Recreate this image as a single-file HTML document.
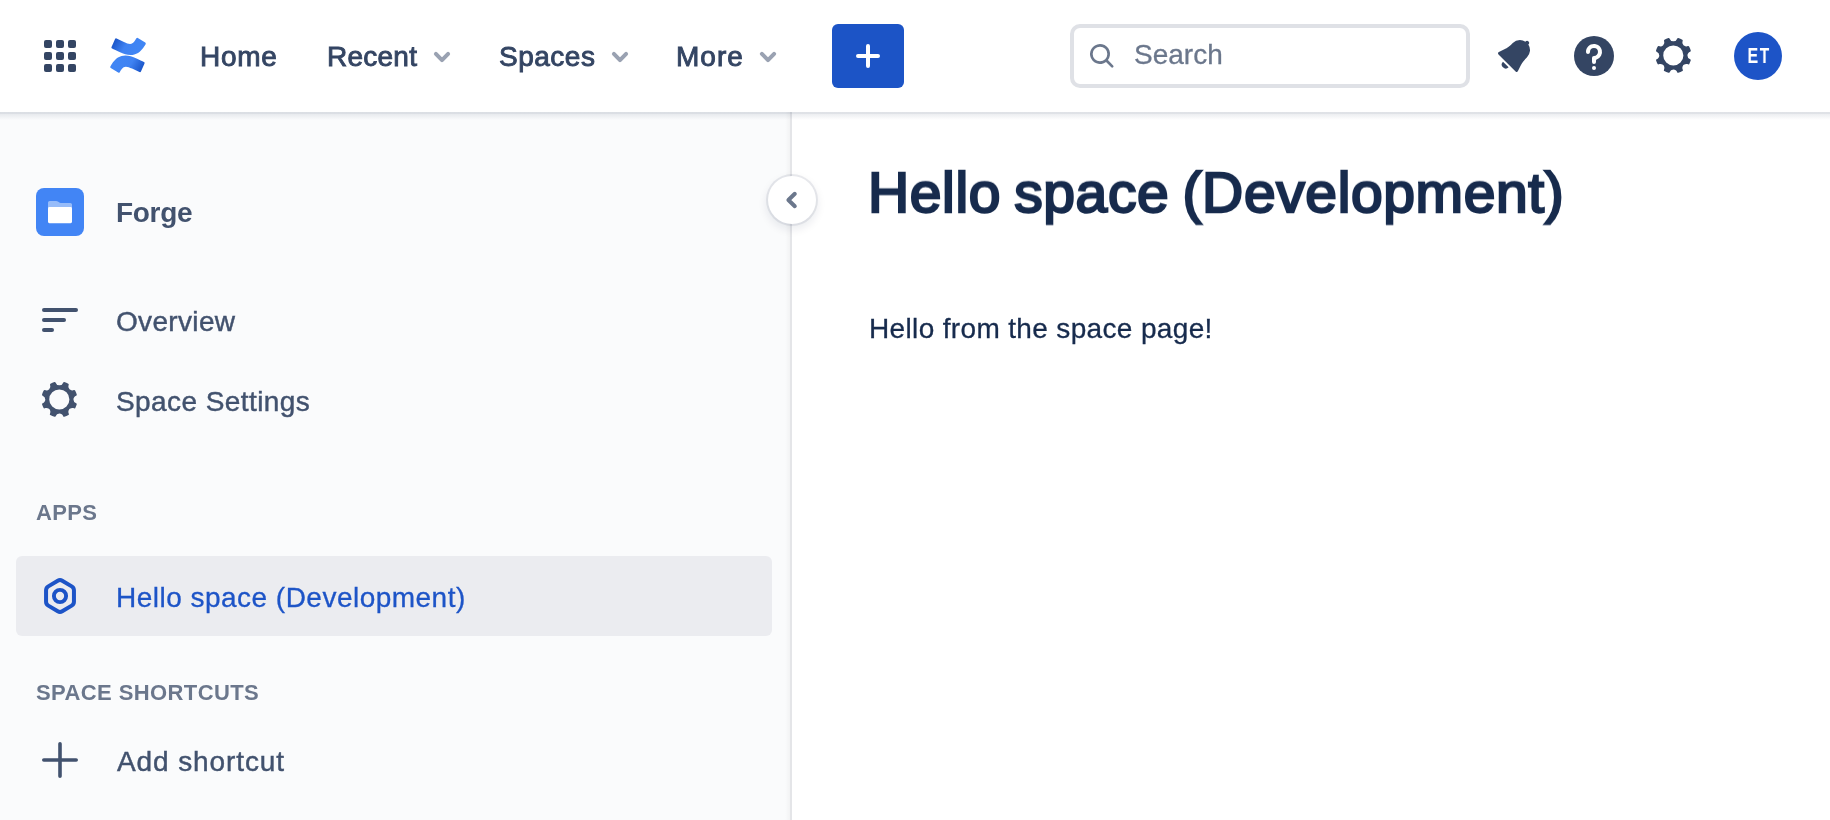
<!DOCTYPE html>
<html lang="en">
<head>
<meta charset="utf-8">
<title>Hello space (Development) - Forge - Confluence</title>
<style>
*{box-sizing:border-box;margin:0;padding:0}
html,body{width:1830px;height:820px;overflow:hidden;background:#fff}
body{position:relative;font-family:"Liberation Sans",sans-serif;color:#172B4D;-webkit-font-smoothing:antialiased}
.abs{position:absolute}
.t{position:absolute;white-space:nowrap;line-height:32px;font-size:28px;will-change:transform}
/* header */
#header{position:absolute;left:0;top:0;width:1830px;height:112px;background:#fff;z-index:5}
#hshadow{position:absolute;left:0;top:112px;width:1830px;height:8px;z-index:4;background:linear-gradient(to bottom,rgba(9,30,66,0.13) 0,rgba(9,30,66,0.13) 2px,rgba(9,30,66,0.08) 2px,rgba(9,30,66,0) 8px)}
.nav{color:#344563;-webkit-text-stroke:0.9px #344563}
.chev{position:absolute;width:48px;height:48px}
#create{position:absolute;left:832px;top:24px;width:72px;height:64px;border-radius:6px;background:#1C54C6}
#search{position:absolute;left:1070px;top:24px;width:400px;height:64px;border:4px solid #DFE1E6;border-radius:10px;background:#fff}
#avatar{position:absolute;left:1734px;top:32px;width:48px;height:48px;border-radius:50%;background:#1D54C7;color:#fff;text-align:center;font-weight:bold;font-size:22px;line-height:48px}
#avatar span{display:inline-block;transform:scaleX(0.72);letter-spacing:2.2px;will-change:transform;position:relative;left:0.8px;top:-0.2px}
/* sidebar */
#sidebar{position:absolute;left:0;top:112px;width:790px;height:708px;background:#FAFBFC}
#divider{position:absolute;left:790px;top:112px;width:2px;height:708px;background:#E4E5E8}
#dshadow{position:absolute;left:785px;top:112px;width:5px;height:708px;background:linear-gradient(to right,rgba(0,0,0,0),rgba(0,0,0,0.03))}
#sel{position:absolute;left:16px;top:556px;width:756px;height:80px;border-radius:6px;background:#EBECF0}
.side{color:#42526E;-webkit-text-stroke:0.45px #42526E}
.head{will-change:transform;position:absolute;white-space:nowrap;font-size:22px;line-height:32px;font-weight:bold;color:#6B778C;letter-spacing:0.6px}
#collapse{position:absolute;left:768px;top:176px;width:48px;height:48px;border-radius:50%;background:#fff;box-shadow:0 0 0 2px rgba(9,30,66,0.08),0 4px 8px 2px rgba(9,30,66,0.08);z-index:6}
svg{position:absolute;overflow:visible}
</style>
</head>
<body>

<div id="header">
  <!-- app switcher -->
  <svg style="left:36px;top:32px" width="48" height="48" viewBox="0 0 24 24" fill="#344563">
    <rect x="4" y="4" width="4" height="4" rx="1"/><rect x="10" y="4" width="4" height="4" rx="1"/><rect x="16" y="4" width="4" height="4" rx="1"/>
    <rect x="4" y="10" width="4" height="4" rx="1"/><rect x="10" y="10" width="4" height="4" rx="1"/><rect x="16" y="10" width="4" height="4" rx="1"/>
    <rect x="4" y="16" width="4" height="4" rx="1"/><rect x="10" y="16" width="4" height="4" rx="1"/><rect x="16" y="16" width="4" height="4" rx="1"/>
  </svg>
  <!-- confluence logo -->
  <svg id="logo" style="left:106.200px;top:33.400px" width="44" height="44" viewBox="0 0 32 32">
    <defs>
      <linearGradient id="lg1" x1="26.8" y1="28.5" x2="11" y2="19.4" gradientUnits="userSpaceOnUse"><stop offset="0" stop-color="#1650C4"/><stop offset="0.55" stop-color="#3F82F2"/><stop offset="1" stop-color="#4085F4"/></linearGradient>
      <linearGradient id="lg2" x1="5.2" y1="3.5" x2="21" y2="12.6" gradientUnits="userSpaceOnUse"><stop offset="0" stop-color="#1650C4"/><stop offset="0.55" stop-color="#3F82F2"/><stop offset="1" stop-color="#4085F4"/></linearGradient>
    </defs>
    <path transform="translate(-0.55 0)" fill="url(#lg1)" d="M4.56 22.94c-.27.44-.57.95-.83 1.36a.83.83 0 0 0 .28 1.13l5.39 3.32a.83.83 0 0 0 1.15-.28c.21-.36.49-.83.79-1.33 2.14-3.53 4.29-3.1 8.17-1.24l5.35 2.54a.83.83 0 0 0 1.12-.42l2.57-5.8a.83.83 0 0 0-.42-1.09c-1.13-.53-3.37-1.59-5.39-2.56-7.27-3.53-13.44-3.3-18.18 4.37z"/>
    <path transform="translate(0.55 0.4)" fill="url(#lg2)" d="M27.44 9.08c.27-.44.57-.95.83-1.36a.83.83 0 0 0-.28-1.13L22.6 3.27a.83.83 0 0 0-1.15.28c-.21.36-.49.83-.79 1.33-2.14 3.53-4.29 3.1-8.17 1.24L7.16 3.6a.83.83 0 0 0-1.12.42L3.47 9.82a.83.83 0 0 0 .42 1.09c1.13.53 3.37 1.59 5.39 2.56 7.27 3.52 13.44 3.29 18.16-4.39z"/>
  </svg>

  <div class="t nav" id="n1" style="left:200px;top:40.500px;letter-spacing:0.750px">Home</div>
  <div class="t nav" id="n2" style="left:326.500px;top:40.500px;letter-spacing:0.250px">Recent</div>
  <svg class="chev" style="left:418px;top:33px" viewBox="0 0 24 24"><path d="M8.950 10.430 12 13.550 15.050 10.430" fill="none" stroke="#9AA2B2" stroke-width="2" stroke-linecap="round" stroke-linejoin="round"/></svg>
  <div class="t nav" id="n3" style="left:499px;top:40.500px;letter-spacing:0.500px">Spaces</div>
  <svg class="chev" style="left:596px;top:33px" viewBox="0 0 24 24"><path d="M8.950 10.430 12 13.550 15.050 10.430" fill="none" stroke="#9AA2B2" stroke-width="2" stroke-linecap="round" stroke-linejoin="round"/></svg>
  <div class="t nav" id="n4" style="left:676px;top:40.500px;letter-spacing:1px">More</div>
  <svg class="chev" style="left:744px;top:33px" viewBox="0 0 24 24"><path d="M8.950 10.430 12 13.550 15.050 10.430" fill="none" stroke="#9AA2B2" stroke-width="2" stroke-linecap="round" stroke-linejoin="round"/></svg>

  <div id="create">
    <svg style="left:12px;top:8px" width="48" height="48" viewBox="0 0 24 24"><path d="M13 11V7a1 1 0 0 0-2 0v4H7a1 1 0 0 0 0 2h4v4a1 1 0 0 0 2 0v-4h4a1 1 0 0 0 0-2h-4z" fill="#fff"/></svg>
  </div>

  <div id="search"></div>
  <svg style="left:1086px;top:40px" width="32" height="32" viewBox="0 0 24 24"><path fill="#6B778C" d="M16.436 15.085l3.940 4.010a1 1 0 0 1-1.425 1.402l-3.938-4.006a7.500 7.500 0 1 1 1.423-1.406zM10.500 16a5.500 5.500 0 1 0 0-11 5.500 5.500 0 0 0 0 11z"/></svg>
  <div class="t" id="stext" style="left:1134px;top:39px;-webkit-text-stroke:0.3px #6B778C;color:#6B778C">Search</div>

  <!-- notification -->
  <svg style="left:1490px;top:32px" width="48" height="48" viewBox="0 0 24 24"><path fill="#344563" fill-rule="evenodd" d="M6.485 17.669a2 2 0 0 0 2.829 0l-2.829-2.83a2 2 0 0 0 0 2.83zm4.897-12.191l-.725.725c-.782.782-2.21 1.813-3.206 2.311l-3.017 1.509c-.495.248-.584.774-.187 1.171l8.556 8.556c.398.396.922.313 1.171-.188l1.51-3.016c.494-.988 1.526-2.42 2.311-3.206l.725-.726a5.048 5.048 0 0 0 .64-6.356 1.01 1.01 0 1 0-1.354-1.494c-.023.025-.046.049-.066.075a5.043 5.043 0 0 0-2.788-.84 5.036 5.036 0 0 0-3.57 1.478z"/></svg>
  <!-- help -->
  <svg style="left:1570px;top:32px" width="48" height="48" viewBox="0 0 24 24"><circle fill="#344563" cx="12" cy="12" r="10"/><circle fill="#fff" cx="12" cy="18" r="1"/><path fill="#fff" d="M15.89 9.05a3.975 3.975 0 0 0-2.957-2.942C10.321 5.514 8.017 7.446 8 9.95l.005.147a.992.992 0 0 0 .982.904c.552 0 1-.447 1.002-.998a2.004 2.004 0 0 1 4.007-.002c0 1.102-.898 2-2.003 2H12a1 1 0 0 0-1 .987v2.014a1.001 1.001 0 0 0 2.004 0v-.782c0-.217.145-.399.35-.472A3.99 3.99 0 0 0 15.89 9.05"/></svg>
  <!-- settings -->
  <svg style="left:1650px;top:32px" width="48" height="48" viewBox="0 0 24 24"><path fill="#344563" fill-rule="evenodd" d="M11.701 16.7a5.002 5.002 0 1 1 0-10.003 5.002 5.002 0 0 1 0 10.004m8.368-3.117a1.995 1.995 0 0 1-1.346-1.885c0-.876.563-1.613 1.345-1.885a.48.48 0 0 0 .315-.574 8.947 8.947 0 0 0-.836-1.993.477.477 0 0 0-.598-.195 2.04 2.04 0 0 1-1.29.08 1.988 1.988 0 0 1-1.404-1.395 2.04 2.04 0 0 1 .076-1.297.478.478 0 0 0-.196-.597 8.98 8.98 0 0 0-1.975-.826.479.479 0 0 0-.574.314 1.995 1.995 0 0 1-1.885 1.346 1.994 1.994 0 0 1-1.884-1.345.482.482 0 0 0-.575-.315c-.708.2-1.379.485-2.004.842a.47.47 0 0 0-.198.582A2.002 2.002 0 0 1 4.445 7.06a.478.478 0 0 0-.595.196 8.946 8.946 0 0 0-.833 1.994.48.48 0 0 0 .308.572 1.995 1.995 0 0 1 1.323 1.877c0 .867-.552 1.599-1.324 1.877a.479.479 0 0 0-.308.57 8.99 8.99 0 0 0 .723 1.79.477.477 0 0 0 .624.194c.595-.273 1.343-.264 2.104.238.117.077.225.185.302.3.527.8.512 1.58.198 2.188a.473.473 0 0 0 .168.628 8.946 8.946 0 0 0 2.11.897.474.474 0 0 0 .57-.313 1.995 1.995 0 0 1 1.886-1.353c.878 0 1.618.567 1.887 1.353a.475.475 0 0 0 .57.313 8.964 8.964 0 0 0 2.084-.883.473.473 0 0 0 .167-.631c-.318-.608-.337-1.393.191-2.195.077-.116.185-.225.302-.302.772-.511 1.527-.513 2.125-.23a.477.477 0 0 0 .628-.19 8.925 8.925 0 0 0 .728-1.793.478.478 0 0 0-.314-.573"/></svg>
  <div id="avatar"><span>ET</span></div>
</div>
<div id="hshadow"></div>

<div id="sidebar"></div>
<div id="dshadow"></div>
<div id="divider"></div>

<!-- space header -->
<div class="abs" style="left:36px;top:188px;width:48px;height:48px;border-radius:8px;background:#4285F5"></div>
<svg style="left:36px;top:188px" width="48" height="48" viewBox="0 0 48 48">
  <path d="M12 14.600a1.600 1.600 0 0 1 1.600-1.600h6.400c1 0 1.600.300 2.300.800l.700.500c.500.400 1 .600 1.700.600H34.400a1.600 1.600 0 0 1 1.600 1.600V34H12z" fill="#fff" fill-opacity="0.45"/>
  <rect x="12" y="19" width="24" height="16.200" rx="1.400" fill="#fff"/>
</svg>
<div class="t" id="forge" style="left:116px;top:196.700px;letter-spacing:-0.300px;color:#42526E;font-weight:bold">Forge</div>

<!-- overview -->
<svg style="left:36px;top:296px" width="48" height="48" viewBox="0 0 24 24" fill="#42526E"><rect x="3" y="6" width="18" height="2" rx="1"/><rect x="3" y="11" width="12" height="2" rx="1"/><rect x="3" y="16" width="6" height="2" rx="1"/></svg>
<div class="t side" id="s1" style="left:116px;top:306px;letter-spacing:0.330px">Overview</div>

<!-- space settings -->
<svg style="left:36px;top:376px" width="48" height="48" viewBox="0 0 24 24"><path fill="#42526E" fill-rule="evenodd" d="M11.701 16.7a5.002 5.002 0 1 1 0-10.003 5.002 5.002 0 0 1 0 10.004m8.368-3.117a1.995 1.995 0 0 1-1.346-1.885c0-.876.563-1.613 1.345-1.885a.48.48 0 0 0 .315-.574 8.947 8.947 0 0 0-.836-1.993.477.477 0 0 0-.598-.195 2.04 2.04 0 0 1-1.29.08 1.988 1.988 0 0 1-1.404-1.395 2.04 2.04 0 0 1 .076-1.297.478.478 0 0 0-.196-.597 8.980 8.980 0 0 0-1.975-.826.479.479 0 0 0-.574.314 1.995 1.995 0 0 1-1.885 1.346 1.994 1.994 0 0 1-1.884-1.345.482.482 0 0 0-.575-.315c-.708.2-1.379.485-2.004.842a.47.47 0 0 0-.198.582A2.002 2.002 0 0 1 4.445 7.060a.478.478 0 0 0-.595.196 8.946 8.946 0 0 0-.833 1.994.48.48 0 0 0 .308.572 1.995 1.995 0 0 1 1.323 1.877c0 .867-.552 1.599-1.324 1.877a.479.479 0 0 0-.308.57 8.990 8.990 0 0 0 .723 1.790.477.477 0 0 0 .624.194c.595-.273 1.343-.264 2.104.238.117.077.225.185.302.3.527.8.512 1.580.198 2.188a.473.473 0 0 0 .168.628 8.946 8.946 0 0 0 2.110.897.474.474 0 0 0 .57-.313 1.995 1.995 0 0 1 1.886-1.353c.878 0 1.618.567 1.887 1.353a.475.475 0 0 0 .57.313 8.964 8.964 0 0 0 2.084-.883.473.473 0 0 0 .167-.631c-.318-.608-.337-1.393.191-2.195.077-.116.185-.225.302-.302.772-.511 1.527-.513 2.125-.23a.477.477 0 0 0 .628-.19 8.925 8.925 0 0 0 .728-1.793.478.478 0 0 0-.314-.573"/></svg>
<div class="t side" id="s2" style="left:116px;top:385.800px;letter-spacing:0.420px">Space Settings</div>

<div class="head" id="h1" style="left:36.400px;top:496.700px;letter-spacing:0.350px">APPS</div>

<div id="sel"></div>
<svg style="left:36px;top:572px" width="48" height="48" viewBox="0 0 24 24"><path d="M10.883 4.365Q12.000 3.700 13.117 4.365L17.855 7.185Q18.972 7.850 18.972 9.150L18.972 14.850Q18.972 16.150 17.855 16.815L13.117 19.635Q12.000 20.300 10.883 19.635L6.145 16.815Q5.028 16.150 5.028 14.850L5.028 9.150Q5.028 7.850 6.145 7.185Z" fill="none" stroke="#1D54C7" stroke-width="2" stroke-linejoin="round"/><circle cx="12" cy="12" r="3.050" fill="none" stroke="#1D54C7" stroke-width="1.950"/></svg>
<div class="t" id="s3" style="left:116px;top:582px;letter-spacing:0.480px;-webkit-text-stroke:0.3px #1D54C7;color:#1D54C7">Hello space (Development)</div>

<div class="head" id="h2" style="left:36.400px;top:676.500px;letter-spacing:0.400px">SPACE SHORTCUTS</div>

<svg style="left:36px;top:736px" width="48" height="48" viewBox="0 0 24 24"><path d="M12 3.900v16.200M3.900 12h16.200" fill="none" stroke="#42526E" stroke-width="1.800" stroke-linecap="round"/></svg>
<div class="t side" id="s4" style="left:117px;top:746.300px;letter-spacing:0.900px">Add shortcut</div>

<!-- collapse button -->
<div id="collapse">
  <svg style="left:0;top:0" width="48" height="48" viewBox="0 0 24 24"><path d="M13.400 8.900 10.200 12 13.400 15.100" fill="none" stroke="#6B778C" stroke-width="2" stroke-linecap="round" stroke-linejoin="round"/></svg>
</div>

<!-- main -->
<div class="t" id="title" style="left:868px;top:160.400px;transform:scaleY(0.977);transform-origin:0 52px;letter-spacing:0.620px;word-spacing:-3.300px;font-size:57px;line-height:64px;font-weight:normal;-webkit-text-stroke:2.400px #172B4D;color:#172B4D">Hello space (Development)</div>
<div class="t" id="body" style="left:869px;top:313px;letter-spacing:0.350px;-webkit-text-stroke:0.3px #172B4D;color:#172B4D">Hello from the space page!</div>

</body>
</html>
